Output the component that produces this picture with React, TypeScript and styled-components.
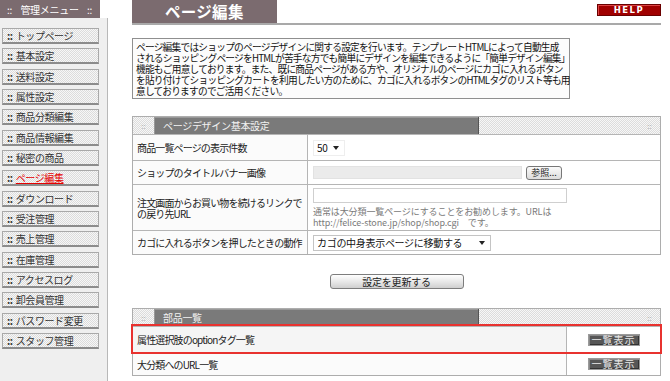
import styled, { createGlobalStyle, css } from "styled-components";

const GlobalStyle = createGlobalStyle`
	html, body {
		margin: 0;
		padding: 0;
		background: #fff;
	}
	body {
		font-family: "Noto Sans CJK JP", "Noto Sans", sans-serif;
		font-size: 10px;
		color: #222;
	}
`;

const dotted = css`
	background-color: #f2f2f2;
	background-image: repeating-conic-gradient(#dcdcdc 0 25%, #f7f7f7 0 50%);
	background-size: 2px 2px;
`;

const Page = styled("div")`
	display: flex;
	min-height: 381px;
`;

const Sidebar = styled("aside")`
	width: 108px;
	display: flex;
	flex-direction: column;
	flex-shrink: 0;
`;

const MenuHeader = styled("div")`
	width: 100px;
	height: 18px;
	box-sizing: border-box;
	padding: 0 8px 0 7px;
	background: #7b6b6f;
	color: #fff;
	display: flex;
	align-items: center;
	justify-content: space-between;
	font-size: 10px;
	letter-spacing: -0.3px;
`;

const MenuPanel = styled("nav")`
	flex: 1;
	background: #efefef;
	border-right: 1px solid #b8b8b8;
	padding: 10px 0 0 2px;
	display: flex;
	flex-direction: column;
	gap: 4.33px;
`;

const MenuButton = styled("a")<{ $active?: boolean }>`
	width: 97px;
	height: 16px;
	box-sizing: border-box;
	border: 1px solid #a9a9a9;
	border-bottom: 2px solid #8c8c8c;
	${dotted};
	background-color: #f4f4f4;
	padding-left: 4px;
	font-size: 10px;
	line-height: 13px;
	letter-spacing: -0.4px;
	white-space: nowrap;
	color: ${({ $active }) => ($active ? "#e60000" : "#333")};
	text-decoration: ${({ $active }) => ($active ? "underline" : "none")};

	b {
		color: #333;
		font-weight: bold;
		margin-right: 3px;
		text-decoration: none;
		display: inline-block;
	}
`;

const Main = styled("main")`
	width: 529px;
	margin-left: 24px;
	display: flex;
	flex-direction: column;
`;

const TitleBar = styled("header")`
	display: flex;
	justify-content: space-between;
	align-items: flex-start;
	border-bottom: 2px solid #a9a9a9;
`;

const Title = styled("h1")`
	margin: 0;
	width: 145px;
	height: 23px;
	box-sizing: border-box;
	padding-left: 33px;
	background: #7b6b6f;
	color: #fff;
	font-size: 15.5px;
	font-weight: bold;
	line-height: 23px;
	letter-spacing: 0.3px;
`;

const HelpButton = styled("a")`
	margin-top: 4px;
	width: 64px;
	height: 12px;
	box-sizing: border-box;
	background: #a00000;
	border: 1px solid #6a0000;
	box-shadow: inset 1px 1px 0 #d44;
	color: #fff;
	font-family: "DejaVu Sans", sans-serif;
	font-size: 8.5px;
	font-weight: bold;
	letter-spacing: 1.5px;
	line-height: 10px;
	text-align: center;
`;

const Description = styled("p")`
	margin: 13px 0 0;
	width: 438px;
	box-sizing: border-box;
	padding: 3px 3px 1px;
	border: 1px solid #8f8f8f;
	background: #fcfcfc;
	font-size: 9.7px;
	line-height: 11px;
	letter-spacing: -0.75px;
	white-space: nowrap;
	color: #111;
`;

const Section = styled("section")<{ $top: number }>`
	margin-top: ${({ $top }) => $top}px;
	width: 529px;
	border: 1px solid #adadad;
	box-sizing: border-box;
`;

const SectionHeader = styled("div")`
	height: 17px;
	display: flex;
	align-items: stretch;
	${dotted};
	color: #aaa;
	font-size: 8px;
`;

const Dots = styled("span")<{ $right?: boolean }>`
	width: 21px;
	display: flex;
	align-items: center;
	justify-content: center;
	margin-left: ${({ $right }) => ($right ? "auto" : "0")};
	color: #b0b0b0;
`;

const HeaderTitle = styled("div")`
	width: 325px;
	background: #7a7a7a;
	border-right: 1px solid #555;
	box-shadow: inset 1px 1px 0 #999;
	padding-left: 9px;
	box-sizing: border-box;
	color: #f2f2f2;
	font-size: 10px;
	line-height: 17px;
	letter-spacing: -0.3px;
`;

const Row = styled("div")<{ $label: number; $height: number; $highlight?: boolean }>`
	display: grid;
	grid-template-columns: ${({ $label }) => $label}px minmax(0, 1fr);
	height: ${({ $height }) => $height}px;
	border-top: 1px solid #b5b5b5;
	box-sizing: border-box;
	${({ $highlight }) =>
		$highlight &&
		css`
			outline: 2px solid #e8322f;
			outline-offset: 0;
			position: relative;
			z-index: 1;
		`}
`;

const Label = styled("div")<{ $shade?: boolean }>`
	display: flex;
	align-items: center;
	min-width: 0;
	padding: 0 4px;
	border-right: 1px solid #b5b5b5;
	background: ${({ $shade }) => ($shade ? "#f5f5f5" : "#fbfbfb")};
	font-size: 10px;
	line-height: 11px;
	letter-spacing: -0.85px;
	color: #222;
	white-space: nowrap;
`;

const Value = styled("div")<{ $center?: boolean; $column?: boolean }>`
	display: flex;
	flex-direction: ${({ $column }) => ($column ? "column" : "row")};
	align-items: ${({ $column }) => ($column ? "flex-start" : "center")};
	justify-content: ${({ $center, $column }) => ($center || $column ? "center" : "flex-start")};
	padding: 0 5px;
	background: #fff;
`;

const FakeSelect = styled("div")<{ $width: number }>`
	width: ${({ $width }) => $width}px;
	height: 16px;
	flex-shrink: 0;
	box-sizing: border-box;
	border: 1px solid ${({ $width }) => ($width < 60 ? "#eee" : "#c4c4c4")};
	background: #fff;
	display: flex;
	align-items: center;
	justify-content: space-between;
	padding: 0 5px 0 3px;
	font-size: 10px;
	letter-spacing: -0.3px;
	color: #111;

	&::after {
		content: "";
		border-left: 3px solid transparent;
		border-right: 3px solid transparent;
		border-top: 4px solid #222;
	}
`;

const TextInput = styled("div")<{ $width: number; $disabled?: boolean }>`
	width: ${({ $width }) => $width}px;
	height: ${({ $disabled }) => ($disabled ? 13 : 15)}px;
	flex-shrink: 0;
	box-sizing: border-box;
	border: 1px solid ${({ $disabled }) => ($disabled ? "#e2e2e2" : "#cfcfcf")};
	background: ${({ $disabled }) => ($disabled ? "#ebebeb" : "#fff")};
`;

const BrowseButton = styled("button")`
	margin-left: 4px;
	width: 36px;
	height: 14px;
	flex-shrink: 0;
	padding: 0;
	border: 1px solid #777;
	border-radius: 3px;
	background: linear-gradient(#fafafa, #dcdcdc);
	font-family: inherit;
	font-size: 9px;
	line-height: 12px;
	color: #222;
`;

const Note = styled("div")`
	margin-top: 3px;
	font-size: 9px;
	line-height: 11px;
	color: #7a7a7a;
	white-space: nowrap;
	letter-spacing: -0.1px;
`;

const Actions = styled("div")`
	display: flex;
	justify-content: center;
	margin-top: 19px;
`;

const UpdateButton = styled("button")`
	width: 134px;
	height: 15px;
	padding: 0;
	border: 1px solid #7d7d7d;
	border-radius: 3px;
	background: linear-gradient(#ffffff, #e4e4e4 60%, #cfcfcf);
	font-family: inherit;
	font-size: 10px;
	line-height: 12px;
	color: #222;
	letter-spacing: -0.2px;
`;

const ListButton = styled("button")`
	width: 52px;
	height: 12px;
	padding: 0;
	border: 1px solid #9a9a9a;
	box-shadow: inset 1px 1px 0 #888, inset -1px -1px 0 #333;
	background: #565656;
	color: #eaeaea;
	font-family: inherit;
	font-size: 10px;
	line-height: 10px;
	letter-spacing: 1px;
`;

const menu = [
	"トップページ",
	"基本設定",
	"送料設定",
	"属性設定",
	"商品分類編集",
	"商品情報編集",
	"秘密の商品",
	"ページ編集",
	"ダウンロード",
	"受注管理",
	"売上管理",
	"在庫管理",
	"アクセスログ",
	"卸会員管理",
	"パスワード変更",
	"スタッフ管理",
];

const descLines = [
	"ページ編集ではショップのページデザインに関する設定を行います。テンプレートHTMLによって自動生成",
	"されるショッピングページをHTMLが苦手な方でも簡単にデザインを編集できるように「簡単デザイン編集」",
	"機能もご用意しております。また、既に商品ページがある方や、オリジナルのページにカゴに入れるボタン",
	"を貼り付けてショッピングカートを利用したい方のために、カゴに入れるボタンのHTMLタグのリスト等も用",
	"意しておりますのでご活用ください。",
];

const App = () => {
	return (
		<>
			<GlobalStyle />
			<Page>
				<Sidebar>
					<MenuHeader>
						<span>::</span>
						<span>管理メニュー</span>
						<span>::</span>
					</MenuHeader>
					<MenuPanel>
						{menu.map((item, i) => (
							<MenuButton key={item} $active={item === "ページ編集"}>
								<b>{i === 0 ? "::" : ":: "}</b>
								{item}
							</MenuButton>
						))}
					</MenuPanel>
				</Sidebar>
				<Main>
					<TitleBar>
						<Title>ページ編集</Title>
						<HelpButton>HELP</HelpButton>
					</TitleBar>
					<Description>
						{descLines.map((line, i) => (
							<span key={i}>
								{line}
								{i < descLines.length - 1 && <br />}
							</span>
						))}
					</Description>

					<Section $top={17}>
						<SectionHeader>
							<Dots>::</Dots>
							<HeaderTitle>ページデザイン基本設定</HeaderTitle>
							<Dots $right>::</Dots>
						</SectionHeader>
						<Row $label={175} $height={26}>
							<Label>商品一覧ページの表示件数</Label>
							<Value>
								<FakeSelect $width={32}>50</FakeSelect>
							</Value>
						</Row>
						<Row $label={175} $height={24}>
							<Label>ショップのタイトルバナー画像</Label>
							<Value>
								<TextInput $width={209} $disabled />
								<BrowseButton>参照...</BrowseButton>
							</Value>
						</Row>
						<Row $label={175} $height={46}>
							<Label>
								注文画面からお買い物を続けるリンクで
								<br />
								の戻り先URL
							</Label>
							<Value $column>
								<TextInput $width={254} />
								<Note>
									通常は大分類一覧ページにすることをお勧めします。URLは
									<br />
									http://felice-stone.jp/shop/shop.cgi　です。
								</Note>
							</Value>
						</Row>
						<Row $label={175} $height={24}>
							<Label>カゴに入れるボタンを押したときの動作</Label>
							<Value>
								<FakeSelect $width={178}>カゴの中身表示ページに移動する</FakeSelect>
							</Value>
						</Row>
					</Section>

					<Actions>
						<UpdateButton>設定を更新する</UpdateButton>
					</Actions>

					<Section $top={19}>
						<SectionHeader>
							<Dots>::</Dots>
							<HeaderTitle>部品一覧</HeaderTitle>
							<Dots $right>::</Dots>
						</SectionHeader>
						<Row $label={434} $height={26} $highlight>
							<Label $shade>属性選択肢のoptionタグ一覧</Label>
							<Value $center>
								<ListButton>一覧表示</ListButton>
							</Value>
						</Row>
						<Row $label={434} $height={23}>
							<Label>大分類へのURL一覧</Label>
							<Value $center>
								<ListButton>一覧表示</ListButton>
							</Value>
						</Row>
					</Section>
				</Main>
			</Page>
		</>
	);
};

export default App;
